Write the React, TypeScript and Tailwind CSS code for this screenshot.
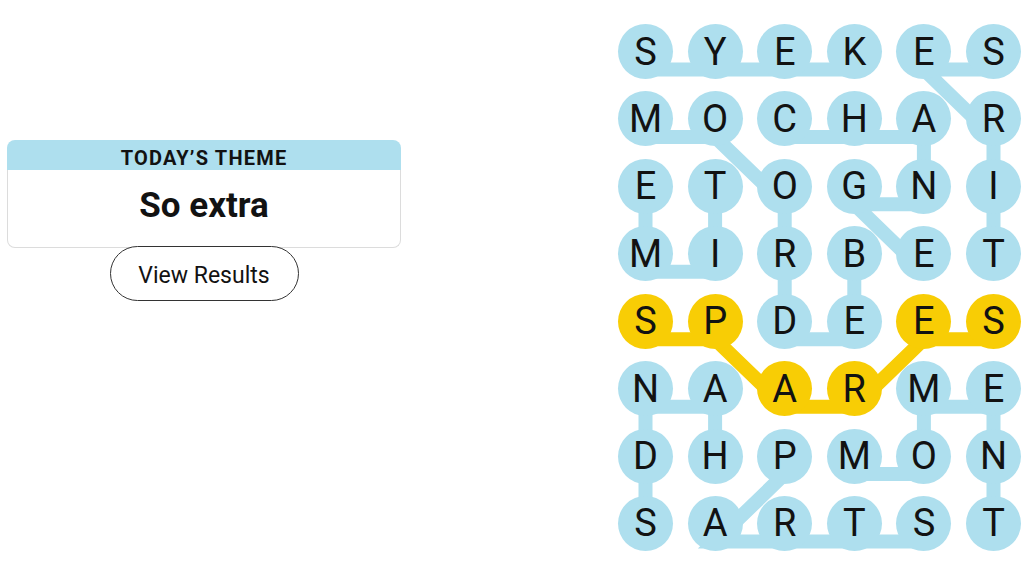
// Strands board — finished puzzle view

const BLUE = "#aedfee";
const YELLOW = "#f8cd05";

const rows = ["SYEKES", "MOCHAR", "ETOGNI", "MIRBET", "SPDEES", "NAARME", "DHPMON", "SARTST"];

type Cell = [number, number];

const spangram: Cell[] = [
  [4, 0],
  [4, 1],
  [5, 2],
  [5, 3],
  [4, 4],
  [4, 5],
];

const words: Cell[][] = [
  [[0, 0], [0, 1], [0, 2], [0, 3]], // keys
  [[3, 5], [2, 5], [1, 5], [0, 4], [0, 5]], // tires
  [[1, 2], [1, 3], [1, 4], [2, 4], [2, 3], [3, 4]], // change
  [[3, 3], [4, 3], [4, 2], [3, 2], [2, 2], [1, 1], [1, 0]], // bedroom
  [[2, 1], [3, 1], [3, 0], [2, 0]], // time
  [[6, 1], [5, 1], [5, 0], [6, 0], [7, 0]], // hands
  [[6, 3], [6, 4], [5, 4], [5, 5], [6, 5], [7, 5]], // moment
  [[6, 2], [7, 1], [7, 2], [7, 3], [7, 4]], // parts
];

const isSpangram = (r: number, c: number) =>
  spangram.some(([sr, sc]) => sr === r && sc === c);

// line layer sits a bit lower than the tile centres, same as the live game
const toPoints = (cells: Cell[]) =>
  cells.map(([r, c]) => `${27.5 + 69.6 * c},${27.5 + 67.43 * r + 18}`).join(" ");

const Board = () => (
  <div className="relative">
    <svg
      className="absolute inset-0 overflow-visible pointer-events-none"
      width="403"
      height="527"
    >
      {words.map((w, i) => (
        <polyline key={i} points={toPoints(w)} fill="none" stroke={BLUE} strokeWidth={14} />
      ))}
      <polyline points={toPoints(spangram)} fill="none" stroke={YELLOW} strokeWidth={14} />
    </svg>
    <div className="relative grid grid-cols-[repeat(6,55px)] gap-x-[14.6px] gap-y-[12.43px]">
      {rows.map((row, r) =>
        row.split("").map((ch, c) => (
          <div
            key={`${r}-${c}`}
            className={`w-[55px] h-[55px] rounded-full flex items-center justify-center text-[38px] leading-none text-[#121212] ${
              isSpangram(r, c) ? "bg-[#f8cd05]" : "bg-[#aedfee]"
            }`}
          >
            {ch}
          </div>
        ))
      )}
    </div>
  </div>
);

export default function App() {
  return (
    <div className="w-[1031px] h-[580px] bg-white flex font-['Roboto',sans-serif] text-[#121212]">
      <div className="w-[394px] ml-[7px] pt-[140px] flex flex-col items-center">
        <div className="w-full">
          <div className="h-[30px] rounded-t-[8px] bg-[#aedfee] flex items-center justify-center pt-[5px] text-[20px] font-bold tracking-[1.2px] leading-none">
            TODAY’S THEME
          </div>
          <div className="h-[78px] rounded-b-[8px] border-x border-b border-[#dcdcdc] flex items-center justify-center pb-[6px] text-[35px] font-bold leading-none">
            So extra
          </div>
        </div>
        <button className="-mt-[2px] w-[189px] h-[55px] rounded-full border border-[#333] bg-white flex items-center justify-center pt-[4px] text-[23px] leading-none">
          View Results
        </button>
      </div>
      <div className="ml-auto mr-[10px] mt-[24px]">
        <Board />
      </div>
    </div>
  );
}
